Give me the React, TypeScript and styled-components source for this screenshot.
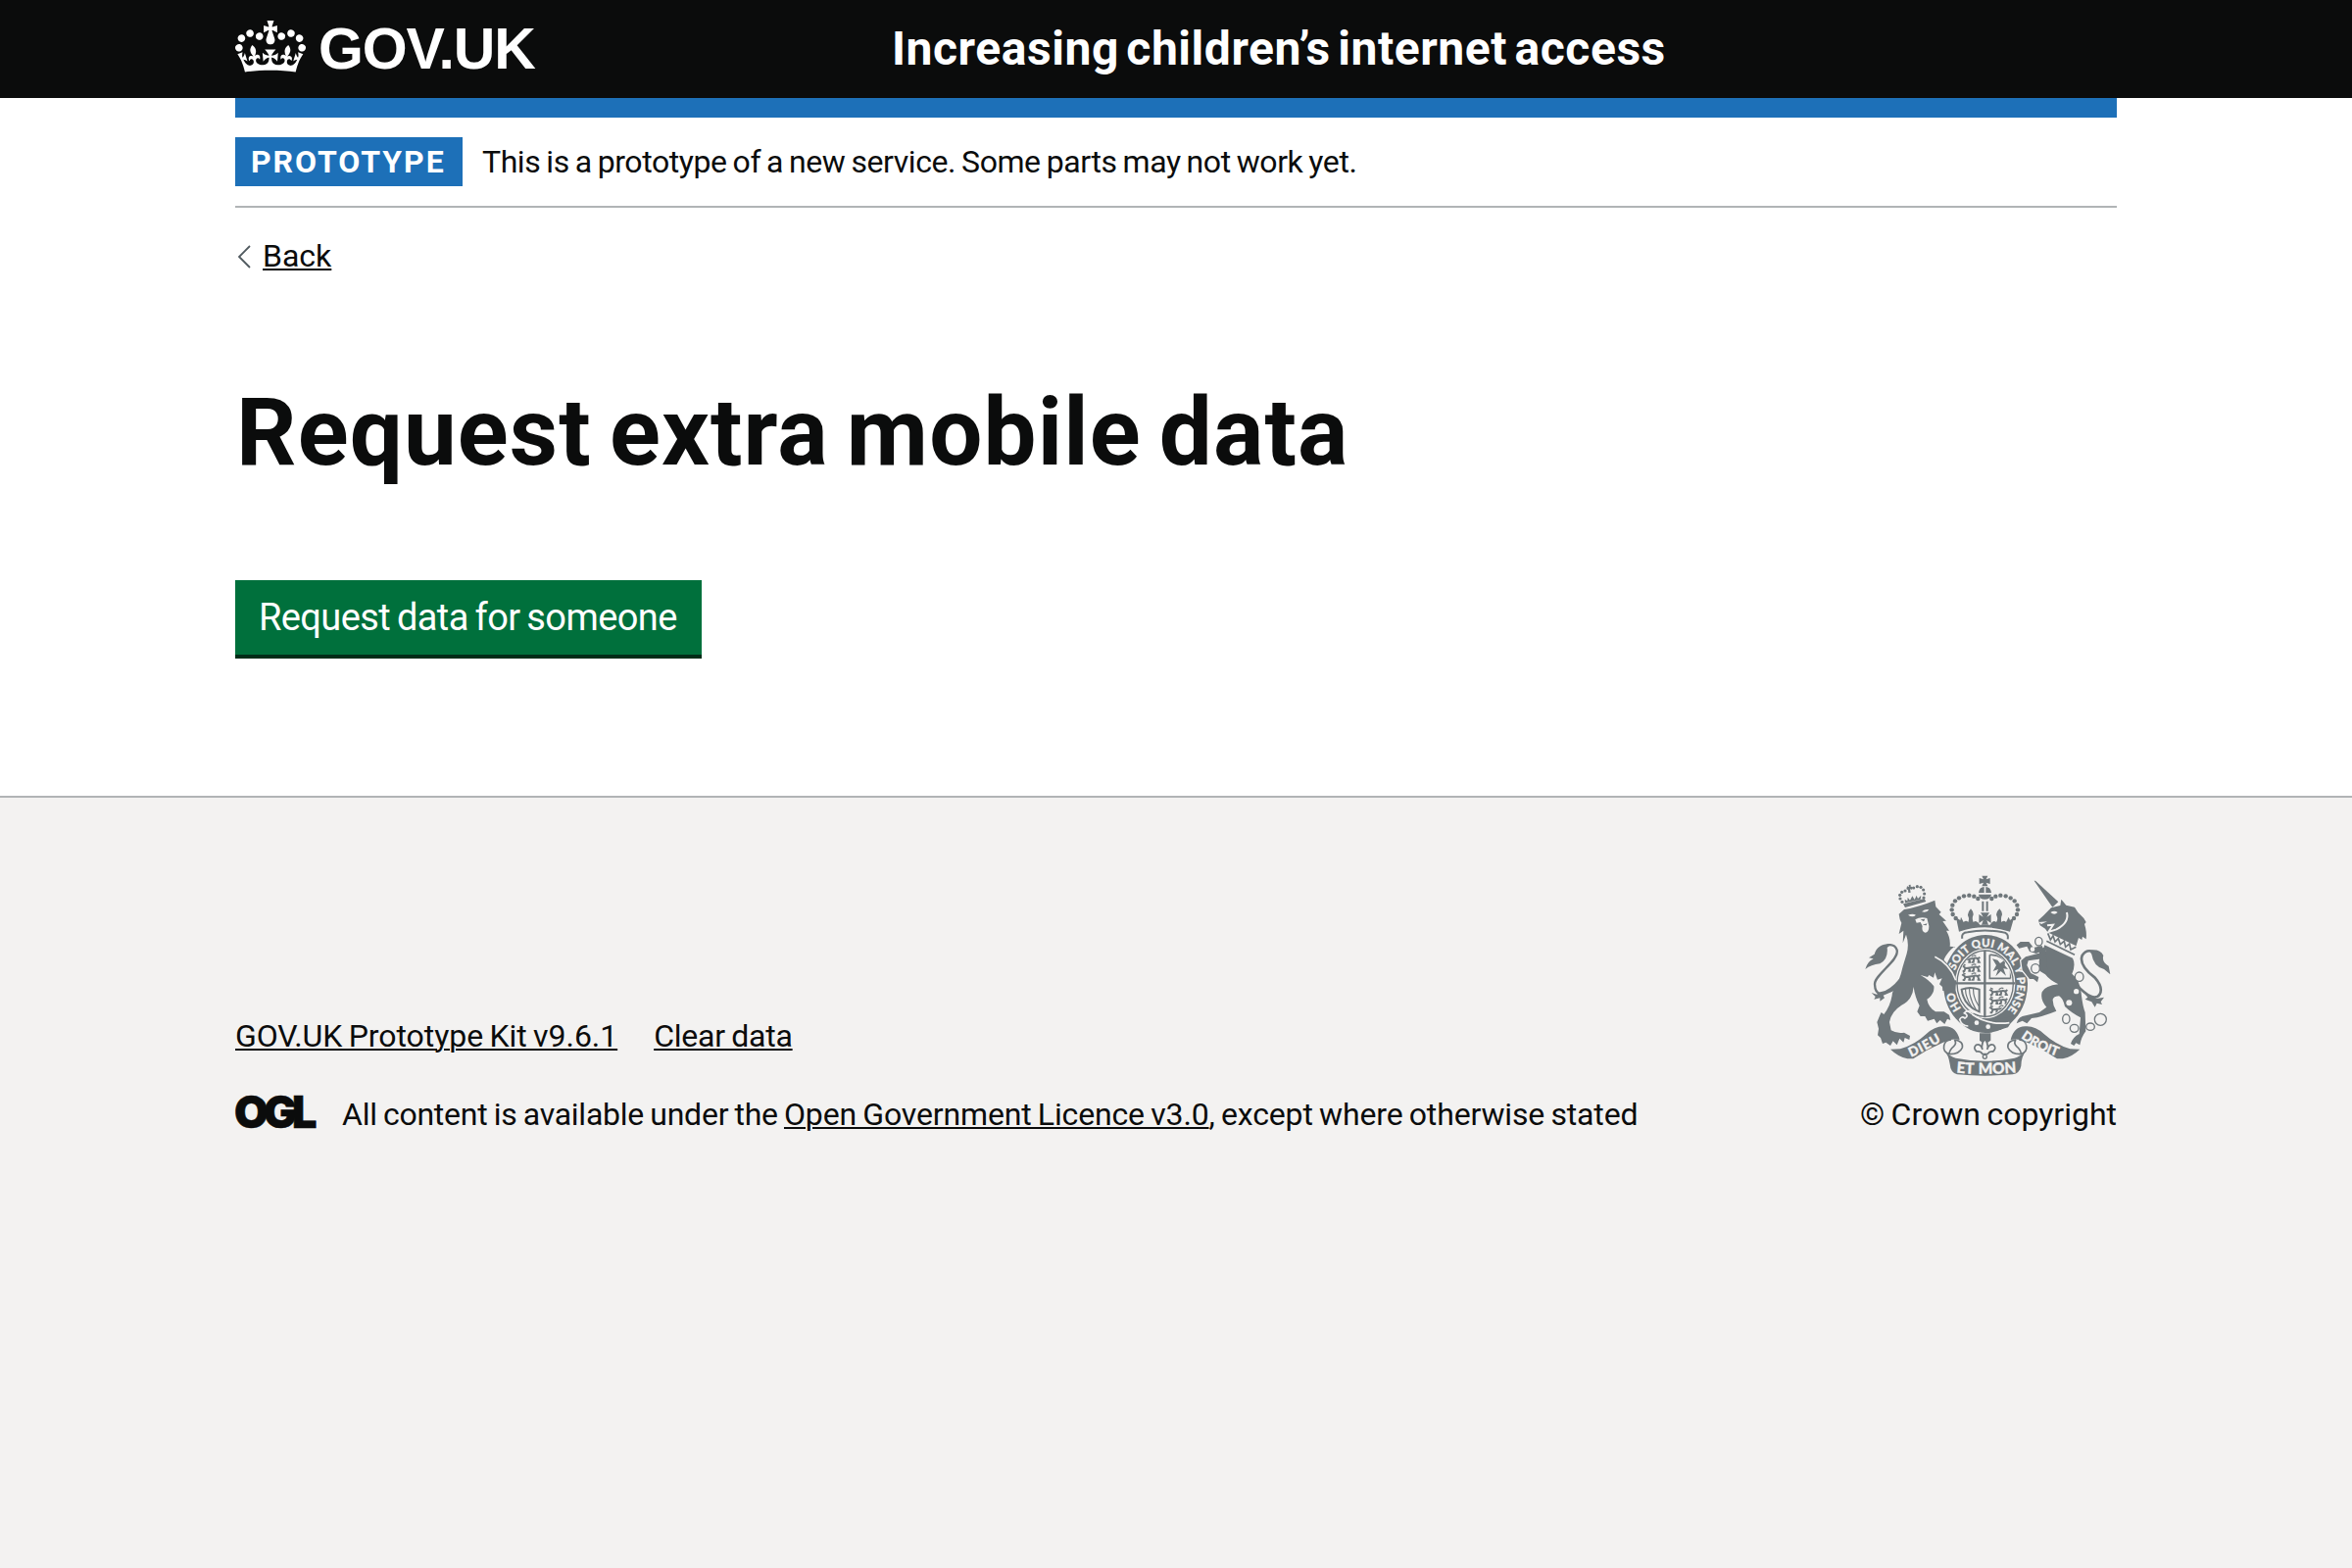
import React from "react";
import styled, { createGlobalStyle } from "styled-components";

const ink = "#0b0c0c";
const blue = "#1d70b8";
const rule = "#b1b4b6";
const paper = "#f3f2f1";
const crestGrey = "#6f777b";

const GlobalStyle = createGlobalStyle`
  * { box-sizing: border-box; }
  body {
    margin: 0;
    background: ${paper};
    color: ${ink};
    font-family: Roboto, "Liberation Sans", Arial, sans-serif;
    font-size: 32px;
    line-height: 40px;
  }
`;

const Page = styled.div`
  display: flex;
  flex-direction: column;
  min-height: 100vh;
  background: #fff;
`;

const Container = styled.div`
  width: 1920px;
  margin: 0 auto;
`;

const Header = styled.header`
  background: ${ink};
  color: #fff;
`;

const HeaderRow = styled(Container)`
  display: grid;
  grid-template-columns: 670px 1fr;
  align-items: center;
  height: 100px;
`;

const HomeLink = styled.a`
  display: flex;
  align-items: center;
  gap: 13px;
  height: 100px;
  color: inherit;
  text-decoration: none;
`;

const CrownIcon = styled.svg`
  width: 72px;
  height: 53px;
  margin-bottom: 5px;
`;

const Wordmark = styled.span`
  font-family: "Liberation Sans", Arial, sans-serif;
  font-size: 59px;
  font-weight: 700;
  line-height: 100px;
  letter-spacing: -1.1px;
  white-space: nowrap;
`;

const ServiceName = styled.span`
  font-size: 48px;
  font-weight: 700;
  line-height: 100px;
  letter-spacing: 0.55px;
  word-spacing: -5px;
`;

const HeaderBar = styled(Container)`
  height: 20px;
  background: ${blue};
`;

const PhaseBanner = styled(Container)`
  display: flex;
  align-items: center;
  gap: 20px;
  padding: 20px 0;
  border-bottom: 2px solid ${rule};
`;

const Tag = styled.strong`
  width: 232px;
  padding: 0 0 0 16px;
  background: ${blue};
  color: #fff;
  font-weight: 700;
  line-height: 50px;
  letter-spacing: 1.95px;
`;

const Text = styled.span<{ $track?: number }>`
  letter-spacing: ${p => p.$track ?? 0}px;
  word-spacing: -1.5px;
  white-space: pre;
`;

const Link = styled.a<{ $track?: number }>`
  color: ${ink};
  letter-spacing: ${p => p.$track ?? 0}px;
  word-spacing: -1.5px;
  white-space: nowrap;
  text-decoration: underline;
  text-decoration-thickness: 2px;
  text-underline-offset: 2px;
`;

const BackRow = styled(Container)`
  display: flex;
  align-items: center;
  gap: 12px;
  padding: 29px 0 0 2px;
`;

const Chevron = styled.svg`
  width: 14px;
  height: 24px;
  margin-top: 2px;
`;

const Main = styled.main`
  width: 1920px;
  margin: 0 auto;
  padding: 110px 0 140px;
`;

const Heading = styled.h1`
  margin: 0 0 101px 1px;
  font-size: 96px;
  font-weight: 700;
  line-height: 100px;
  letter-spacing: 1.15px;
  word-spacing: -7px;
`;

const Button = styled.button`
  display: block;
  width: 476px;
  height: 80px;
  padding: 1px 0 0 24px;
  border: 0;
  border-bottom: 4px solid #002d18;
  background: #00703c;
  color: #fff;
  font: 400 38px/75px Roboto, "Liberation Sans", sans-serif;
  letter-spacing: -0.6px;
  word-spacing: -2px;
  text-align: left;
  white-space: nowrap;
`;

const Footer = styled.footer`
  flex: 1;
  padding-top: 79px;
  border-top: 2px solid ${rule};
  background: ${paper};
`;

const FooterRow = styled(Container)`
  display: flex;
  align-items: flex-end;
  justify-content: space-between;
`;

const FooterMeta = styled.div`
  display: flex;
  flex-direction: column;
  gap: 40px;
`;

const FooterLinks = styled.div`
  display: flex;
  gap: 37px;
`;

const Licence = styled.div`
  display: flex;
  align-items: center;
`;

const OglMark = styled.span`
  width: 110px;
  padding-bottom: 5px;
  margin-left: -1px;
  font-family: Inter, "Liberation Sans", sans-serif;
  font-size: 45px;
  font-weight: 900;
  line-height: 35px;
  letter-spacing: -4.9px;
  -webkit-text-stroke: 0.6px ${ink};
`;

const Copyright = styled.div`
  display: flex;
  flex-direction: column;
  align-items: center;
  gap: 18px;
`;

const CrestArt = styled.svg`
  width: 252px;
  height: 206px;
`;

function Crown() {
  return (
    <CrownIcon viewBox="0 0 132 97" preserveAspectRatio="none" aria-hidden="true">
      <path
        fill="#fff"
        fillRule="evenodd"
        d="M25 30.2c3.5 1.5 7.7-.2 9.1-3.7 1.5-3.6-.2-7.8-3.9-9.2-3.6-1.4-7.6.3-9.1 3.9-1.4 3.5.3 7.5 3.9 9zM9 39.5c3.6 1.5 7.8-.2 9.2-3.7 1.5-3.6-.2-7.8-3.9-9.1-3.6-1.5-7.6.2-9.1 3.8-1.4 3.5.3 7.5 3.8 9zM4.4 57.2c3.5 1.5 7.7-.2 9.1-3.8 1.5-3.6-.2-7.7-3.9-9.1-3.5-1.5-7.6.3-9.1 3.8-1.4 3.5.3 7.6 3.9 9.1zm38.3-21.4c3.5 1.5 7.7-.2 9.1-3.8 1.5-3.6-.2-7.7-3.9-9.1-3.6-1.5-7.6.3-9.1 3.8-1.3 3.6.4 7.7 3.9 9.1zm64.4-5.6c-3.6 1.5-7.8-.2-9.1-3.7-1.5-3.6.2-7.8 3.8-9.2 3.6-1.4 7.7.3 9.2 3.9 1.3 3.5-.4 7.5-3.9 9zm15.9 9.3c-3.6 1.5-7.7-.2-9.1-3.7-1.5-3.6.2-7.8 3.7-9.1 3.6-1.5 7.7.2 9.2 3.8 1.5 3.5-.3 7.5-3.8 9zm4.7 17.7c-3.6 1.5-7.8-.2-9.2-3.8-1.5-3.6.2-7.7 3.9-9.1 3.6-1.5 7.7.3 9.2 3.8 1.3 3.5-.4 7.6-3.9 9.1zM89.3 35.8c-3.6 1.5-7.8-.2-9.2-3.8-1.4-3.6.2-7.7 3.9-9.1 3.6-1.5 7.7.3 9.2 3.8 1.4 3.6-.3 7.7-3.9 9.1zM69.7 17.7l8.9 4.7V9.3l-8.9 2.8c-.2-.3-.5-.6-.9-.9L72.4 0H59.6l3.5 11.2c-.3.3-.6.5-.9.9l-8.8-2.8v13.1l8.8-4.7c.3.3.6.7.9.9l-5 15.4v.1c-.2.8-.4 1.6-.4 2.4 0 4.1 3.1 7.5 7 8.1h.2c.3 0 .7.1 1 .1.4 0 .7 0 1-.1h.2c4-.6 7.1-4.1 7.1-8.1 0-.8-.1-1.7-.4-2.4V34l-5.1-15.4c.4-.2.7-.6 1-.9zM66 92.8c16.9 0 32.8 1.1 47.1 3.2 4-16.9 8.9-26.7 14-33.5l-9.6-3.4c1 4.9 1.1 7.2 0 10.2-1.5-1.4-3-4.3-4.2-8.7L108.6 76c2.8-2 5-3.2 7.5-3.3-4.4 9.4-10 11.9-13.6 11.2-4.3-.8-6.3-4.6-5.6-7.9 1-4.7 5.7-5.9 8-.5 4.3-8.7-3-11.4-7.6-8.8 7.1-7.2 7.9-13.5 2.1-21.1-8 6.1-8.1 12.3-4.5 20.8-4.7-5.4-12.1-2.5-9.5 6.2 3.4-5.2 7.9-2 7.2 3.1-.6 4.3-6.4 7.8-13.5 7.2-10.3-.9-10.9-8-11.2-13.8 2.5-.5 7.1 1.8 11 7.3L80.2 60c-4.1 4.4-8 5.3-12.3 5.4 1.4-4.4 8-11.6 8-11.6H55.5s6.4 7.2 7.9 11.6c-4.2-.1-8-1-12.3-5.4l1.4 16.4c3.9-5.5 8.5-7.7 10.9-7.3-.3 5.8-.9 12.8-11.1 13.8-7.2.6-12.9-2.9-13.5-7.2-.7-5 3.8-8.3 7.1-3.1 2.7-8.7-4.6-11.6-9.4-6.2 3.7-8.5 3.6-14.7-4.6-20.8-5.8 7.6-5 13.9 2.2 21.1-4.7-2.6-11.9.1-7.7 8.8 2.3-5.5 7.1-4.2 8.1.5.7 3.3-1.3 7.1-5.7 7.9-3.5.7-9-1.8-13.5-11.2 2.5.1 4.7 1.3 7.5 3.3l-4.7-15.4c-1.2 4.4-2.7 7.2-4.3 8.7-1.1-3-.9-5.3 0-10.2l-9.5 3.4c5 6.9 9.9 16.7 14 33.5 14.8-2.1 30.8-3.2 47.7-3.2z"
      />
    </CrownIcon>
  );
}

const archBeads = [
  [348, 202], [339, 190], [336, 176], [338, 162], [346, 149],
  [358, 140], [373, 134], [389, 132], [404, 135], [416, 142],
];
const lionBeads = [
  [184, 152], [178, 142], [177, 131], [183, 122], [193, 118],
  [219, 109], [230, 105], [241, 107], [249, 115], [252, 127], [250, 139],
];
const motto = { fontFamily: "Lato, 'Liberation Sans', sans-serif", fontWeight: 900 };

function PassantLions({ x, y }: { x: number; y: number }) {
  return (
    <g transform={`translate(${x} ${y})`} fill="none" stroke={crestGrey} strokeWidth="6">
      {[0, 27, 54].map(row => (
        <g key={row} transform={`translate(0 ${row})`}>
          <path d="M2 6Q6 0 9 8L14 10L36 7Q44 4 50 8L56 3M12 9L8 19H3M22 9L26 18H20M38 8L36 18H31M49 8L54 18H48" />
          <path d="M4 -3L12 1M30 2Q38 -5 44 -1" strokeWidth="4" />
        </g>
      ))}
    </g>
  );
}

function RoyalArms() {
  return (
    <CrestArt viewBox="70 70 756 618" aria-hidden="true">
      <defs>
        <path id="garter" d="M438 515A98 113 0 0 1 438 289A98 113 0 0 1 438 515" />
        <path id="dieu" d="M211 627Q260 606 330 562" />
        <path id="droit" d="M547 568Q606 612 700 638" />
        <path id="mon" d="M345 674Q437 684 560 672" />
        <clipPath id="field"><ellipse cx="438" cy="402" rx="82" ry="98" /></clipPath>
      </defs>

      <g fill={crestGrey}>
        {/* garter and shield */}
        <ellipse cx="439" cy="403" rx="129" ry="150" />
        <ellipse cx="438" cy="402" rx="92" ry="107" fill={paper} />
        <ellipse cx="438" cy="402" rx="86" ry="101" fill="none" stroke={crestGrey} strokeWidth="4" />
        <path d="M437 300V506M348 401H530" stroke={crestGrey} strokeWidth="7" />
        <g clipPath="url(#field)">
          <PassantLions x={366} y={318} />
          <PassantLions x={450} y={418} />
          <path d="M452 314V386H516M452 314Q490 312 516 350V386" fill="none" stroke={crestGrey} strokeWidth="5" />
          <path d="M460 326L476 330L484 340L500 328L498 346L508 358L494 356L502 378L486 364L470 380L478 358L462 364L472 346Z" />
          <path d="M366 420Q392 410 420 420V488Q372 470 366 420Z" fill="none" stroke={crestGrey} strokeWidth="6" />
          <path d="M378 418Q376 440 398 476M390 416Q388 444 410 482M402 416Q400 444 418 470" fill="none" stroke={crestGrey} strokeWidth="3.5" />
        </g>
        <path d="M372 486Q440 528 532 498L508 536Q450 560 384 532Z" />
        <path d="M398 496Q446 530 512 522" fill="none" stroke={paper} strokeWidth="5" />
        <path d="M402 492Q384 480 374 492Q390 500 376 508Q366 500 360 512Q366 532 386 532" fill="none" stroke={paper} strokeWidth="5" />
        <circle cx="412" cy="522" r="7" fill={paper} />
        <circle cx="447" cy="534" r="7" fill={paper} />
        <text {...motto} fontSize="35" fill={paper} stroke={paper} strokeWidth="0.8" letterSpacing="1">
          <textPath href="#garter" startOffset="84">HO</textPath>
        </text>
        <text {...motto} fontSize="34" fill={paper} stroke={paper} strokeWidth="0.8" letterSpacing="0.5">
          <textPath href="#garter" startOffset="206">SOIT QUI MAL Y PENSE</textPath>
        </text>

        {/* lion */}
        <path d="M174 189L190 175Q236 167 284 147L287 167L303 183L297 190L319 210L308 211L328 240L319 240Q333 263 330 288L346 290Q326 304 312 330L340 360L350 395L345 430L334 422L328 432L320 424L308 424L307 412L298 404L306 386L292 390L284 368L280 384L266 376L262 382L240 376Q268 392 281 410Q284 434 260 450Q264 474 286 488L312 488L328 498L332 514L322 510L314 526L300 514L290 524L282 510L262 516L254 502L240 502L230 488L237 470Q222 440 219 412Q216 452 182 468Q150 488 145 520L150 545Q168 556 190 552L208 562L206 574L192 568L188 582L176 570L168 590L156 578L148 592L134 582L124 586L118 568L109 560L112 540L107 520L116 498L120 490L128 496Q150 468 154 430Q176 396 186 350L198 310Q206 280 196 252L186 278L188 240L174 250L182 216L177 206Z" />
        <path d="M164 410Q102 458 100 404C98 376 176 330 168 299Q162 280 138 284" fill="none" stroke={crestGrey} strokeWidth="7" />
        <path d="M152 280Q108 278 99 312L82 323L96 326Q78 334 71 358Q88 344 116 341Q142 328 138 292ZM90 430L106 435L117 428Q146 424 178 384L168 420L126 438L130 446L116 456L116 446L98 450L102 442Z" />
        <path d="M284 320Q330 342 348 392M314 330Q324 308 344 292" fill="none" stroke={paper} strokeWidth="5" />
        <path d="M202 192Q216 186 226 192Q216 202 202 192ZM244 182Q256 172 266 176Q260 186 244 182ZM224 206Q240 196 260 202L266 226Q266 246 254 246Q242 242 246 226L240 214L228 216Z" fill={paper} />
        <path d="M240 206L254 204L250 212ZM246 222L260 218L258 224Z" />
        {lionBeads.map(([x, y]) => <circle key={x} cx={x} cy={y} r="4.8" />)}
        <path d="M187 158L252 142L257 151L193 169ZM199 104L205 106L204 100L210 99L210 105L216 106L214 114L208 113L210 123L203 124L202 115L197 113ZM193 155L192 144L200 149L201 138L208 147L215 134L222 145L228 132L232 142L242 132L240 144Z" />

        {/* imperial crown */}
        {archBeads.map(([x, y]) => <circle key={x} cx={x} cy={y} r="6.6" />)}
        {archBeads.map(([x, y]) => <circle key={`r${x}`} cx={874 - x} cy={y} r="6.6" />)}
        <path d="M428 72H446L441 83L453 79V97L441 93L446 104H428L433 93L420 97V79L433 83Z" />
        <path d="M418 124Q420 106 435 106V124ZM440 106Q455 106 457 124H440ZM418 129H457Q454 144 437 144Q420 144 418 129ZM428 150H434V180H428ZM441 150H447V180H441Z" />
        <path d="M424 185H451L443 198L456 190V217L443 208L448 222H427L432 208L419 217V190L432 198Z" />
        <path d="M358 243L349 200L362 208L364 198L372 214Q380 206 386 214Q390 204 386 196Q382 186 394 173Q406 186 400 196Q398 206 402 214Q412 206 422 222H453Q462 206 472 214Q478 206 474 196Q468 186 482 173Q494 186 488 196Q486 206 488 214Q496 206 502 214L510 198L514 208L527 198L514 243Q437 217 358 243Z" />
        <path d="M368 264Q364 246 384 245Q437 234 492 245Q511 247 507 266" fill="none" stroke={crestGrey} strokeWidth="6" />

        {/* unicorn */}
        <path d="M588 87H592L662 152L644 168Z" />
        <path d="M640 170L668 163L671 144L686 162L712 168L722 184L740 202L747 214L742 220Q750 244 747 266L736 258L734 268L724 262L716 288L690 280L636 254L622 234L606 224L601 208L618 192Z" />
        <path d="M688 184Q696 216 656 236L632 244L646 222L628 224" fill="none" stroke={paper} strokeWidth="6" />
        <path d="M638 184Q650 176 660 184Q650 194 638 184ZM602 214L628 212L610 220Z" fill={paper} />
        <path d="M624 256L632 246L720 288L712 318L620 276Z" fill={paper} />
        <path d="M626 272L712 314M630 248L638 268L646 256L652 274L662 264L668 282L680 272L684 290L696 280L700 298L716 290" fill="none" stroke={crestGrey} strokeWidth="5" />
        <path d="M620 284L706 324Q716 344 704 372Q728 392 732 430Q736 470 744 490L746 548Q732 566 728 590L716 584L710 592L700 586Q706 566 726 556L730 506Q700 490 682 472Q676 446 664 440Q650 440 645 450Q644 468 656 486Q612 504 580 508L566 524L552 516L534 524Q540 502 562 500L604 490L626 474Q606 452 612 428Q622 408 662 404Q636 392 622 374L606 364L602 326Z" />
        <path d="M618 300L594 310L574 304L566 288L542 294L534 284L546 274L572 274L586 292L612 286ZM614 326L570 332L566 346L578 370L602 382L598 398L586 388L574 388L552 360L548 332L562 320L608 308Z" stroke={paper} strokeWidth="8" paintOrder="stroke" />
        <path d="M622 288L604 300V362L630 372Z" />
        <path d="M716 404Q772 464 789 434Q800 414 774 384Q724 346 735 316Q748 296 768 304" fill="none" stroke={crestGrey} strokeWidth="8" />
        <path d="M756 300Q790 294 800 316Q794 336 816 348L821 374L802 358Q770 350 764 312ZM728 414Q752 442 780 448L802 444L792 458L796 466L780 462L774 474L764 458L744 450L752 444Z" />
        <g fill={paper} stroke={crestGrey} strokeWidth="4">
          <ellipse cx="602" cy="273" rx="11" ry="13" />
          <ellipse cx="592" cy="356" rx="13" ry="14" />
          <ellipse cx="726" cy="381" rx="13" ry="14" />
          <ellipse cx="686" cy="510" rx="11" ry="14" />
          <ellipse cx="711" cy="539" rx="13" ry="12" />
          <ellipse cx="760" cy="534" rx="13" ry="11" />
          <circle cx="791" cy="512" r="18" />
        </g>
        <g fill={paper}>
          <circle cx="583" cy="297" r="7" />
          <circle cx="717" cy="426" r="8" />
          <circle cx="695" cy="461" r="9" />
        </g>

        {/* pendant */}
        <path d="M421 554H455V576L437 588L421 576Z" />
        <path d="M437 572Q450 588 444 604Q450 584 464 590Q474 600 462 610Q452 608 444 618H430Q424 608 412 610Q400 600 410 590Q424 584 430 604Q424 588 437 572Z" fill={paper} stroke={crestGrey} strokeWidth="5" />
        <circle cx="437" cy="626" r="6" fill={paper} stroke={crestGrey} strokeWidth="4" />

        {/* ribbon */}
        <path d="M148 603L178 602Q222 590 258 556Q286 530 316 533Q350 534 360 574Q336 568 306 584Q260 604 218 632H200Q172 626 148 603Z" />
        <path d="M728 603L698 602Q656 590 618 556Q590 530 560 533Q526 534 516 574Q540 568 570 584Q616 604 658 632H676Q704 626 728 603Z" />
        <path d="M344 574Q372 578 368 598Q360 618 330 618Q308 612 312 592Q314 576 334 574M344 574Q352 584 342 594Q328 606 328 618" fill={paper} stroke={crestGrey} strokeWidth="5" />
        <path d="M532 574Q504 578 508 598Q516 618 546 618Q568 612 564 592Q562 576 542 574M532 574Q524 584 534 594Q548 606 548 618" fill={paper} stroke={crestGrey} strokeWidth="5" />
        <path d="M312 606Q332 626 348 630Q437 648 528 630Q544 626 564 606Q548 626 548 654Q544 676 522 680Q437 688 352 680Q332 674 330 648Q326 620 312 606Z" />
        <g {...motto} fill={paper} stroke={paper} strokeWidth="1">
          <text fontSize="40" letterSpacing="3"><textPath href="#dieu">DIEU</textPath></text>
          <text fontSize="40"><textPath href="#droit">DROIT</textPath></text>
          <text fontSize="46" wordSpacing="4"><textPath href="#mon" startOffset="5">ET MON</textPath></text>
        </g>
      </g>
    </CrestArt>
  );
}

export default function App() {
  return (
    <Page>
      <GlobalStyle />
      <Header>
        <HeaderRow>
          <HomeLink>
            <Crown />
            <Wordmark>GOV.UK</Wordmark>
          </HomeLink>
          <ServiceName>Increasing children’s internet access</ServiceName>
        </HeaderRow>
      </Header>
      <HeaderBar />
      <PhaseBanner>
        <Tag>PROTOTYPE</Tag>
        <Text $track={-0.43}>This is a prototype of a new service. Some parts may not work yet.</Text>
      </PhaseBanner>
      <BackRow>
        <Chevron viewBox="0 0 14 24">
          <path d="M13 1L2 12L13 23" fill="none" stroke="#505a5f" strokeWidth="1.8" />
        </Chevron>
        <Link>Back</Link>
      </BackRow>
      <Main>
        <Heading>Request extra mobile data</Heading>
        <Button>Request data for someone</Button>
      </Main>
      <Footer>
        <FooterRow>
          <FooterMeta>
            <FooterLinks>
              <Link $track={-0.05}>GOV.UK Prototype Kit v9.6.1</Link>
              <Link $track={-0.21}>Clear data</Link>
            </FooterLinks>
            <Licence>
              <OglMark>OGL</OglMark>
              <Text $track={-0.24}>{"All content is available under the "}</Text>
              <Link $track={-0.15}>Open Government Licence v3.0</Link>
              <Text $track={-0.15}>, except where otherwise stated</Text>
            </Licence>
          </FooterMeta>
          <Copyright>
            <RoyalArms />
            <Text $track={0}>© Crown copyright</Text>
          </Copyright>
        </FooterRow>
      </Footer>
    </Page>
  );
}
